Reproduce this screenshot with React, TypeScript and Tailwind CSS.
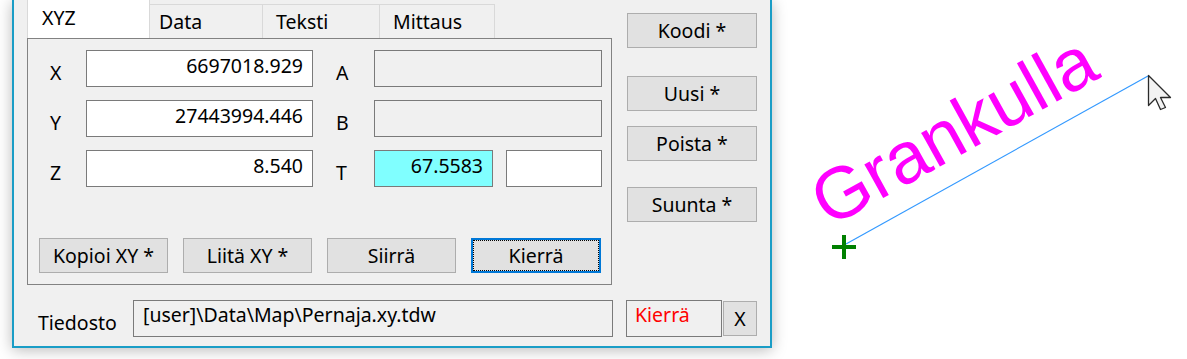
import React from 'react';

const Field: React.FC<{ value?: string; className?: string }> = ({ value = '', className = '' }) => (
  <div className={`h-[37px] border border-[#7a7a7a] pr-[9px] pt-[2px] text-right ${className}`}>{value}</div>
);

const Button: React.FC<{ label: string; className?: string }> = ({ label, className = '' }) => (
  <div className={`flex h-[35px] items-center justify-center border border-[#adadad] bg-[#e1e1e1] ${className}`}>
    {label}
  </div>
);

const Row: React.FC<{ left: string; value: string; right: string; children: React.ReactNode }> = ({
  left,
  value,
  right,
  children,
}) => (
  <div className="flex items-start">
    <div className="w-[58px] pl-[22px] pt-[10px]">{left}</div>
    <Field value={value} className="w-[227px] bg-white" />
    <div className="w-[61px] pl-[23px] pt-[10px]">{right}</div>
    {children}
  </div>
);

const Canvas: React.FC = () => (
  <svg width="415" height="359" viewBox="772 0 415 359" className="block shrink-0">
    <line x1="846" y1="244" x2="1148" y2="76" stroke="#3399ff" strokeWidth="1.2" />
    <text
      x="829"
      y="228"
      transform="rotate(-29 829 228)"
      fill="#ff00ff"
      fontFamily="'Liberation Sans', Arial, sans-serif"
      fontSize="73"
    >
      Grankulla
    </text>
    <g stroke="#008000" strokeWidth="4">
      <line x1="832" y1="247" x2="856" y2="247" />
      <line x1="844" y1="235" x2="844" y2="259" />
    </g>
    <path
      d="M0 0 V30 L7 23 L12 34 L17 32 L12 22 H22 Z"
      transform="translate(1148.5 75.5)"
      fill="#f2f2f2"
      stroke="#2b2b2b"
      strokeWidth="1.3"
      strokeLinejoin="round"
    />
  </svg>
);

export default function App() {
  return (
    <div className="flex h-[359px] w-[1187px] overflow-hidden bg-white font-['Noto_Sans','DejaVu_Sans',sans-serif] text-[19.5px] leading-[26px] text-black">
      <div className="relative z-10 ml-[12px] flex h-[348px] w-[760px] shrink-0 flex-col border-x-2 border-b-2 border-[#1a9dc6] bg-[#f0f0f0] shadow-[0_2px_14px_rgba(0,0,0,0.28)]">
        <div className="flex pl-[13px]">
          <div className="flex w-[585px] flex-col">
            <div className="flex h-[38px] items-end">
              <div className="h-[38px] w-[123px] border-x border-[#d9d9d9] bg-white pl-[14px] pt-[5px]">XYZ</div>
              <div className="h-[34px] w-[113px] border-r border-t border-[#d9d9d9] pl-[9px] pt-[4px]">Data</div>
              <div className="h-[34px] w-[117px] border-r border-t border-[#d9d9d9] pl-[13px] pt-[4px]">Teksti</div>
              <div className="h-[34px] w-[115px] border-r border-t border-[#d9d9d9] pl-[13px] pt-[4px]">Mittaus</div>
            </div>
            <div className="flex h-[247px] flex-col border border-[#828282] pb-[11px] pt-[11px]">
              <div className="flex flex-col gap-[13px]">
                <Row left="X" value="6697018.929" right="A">
                  <Field className="w-[228px] bg-[#f0f0f0]" />
                </Row>
                <Row left="Y" value="27443994.446" right="B">
                  <Field className="w-[228px] bg-[#f0f0f0]" />
                </Row>
                <Row left="Z" value="8.540" right="T">
                  <Field value="67.5583" className="w-[119px] bg-[#80ffff]" />
                  <Field className="ml-[13px] w-[96px] bg-white" />
                </Row>
              </div>
              <div className="mt-auto flex gap-[15px] pl-[11px]">
                <Button label="Kopioi XY *" className="w-[129px]" />
                <Button label="Liitä XY *" className="w-[129px]" />
                <Button label="Siirrä" className="w-[129px]" />
                <div className="h-[35px] w-[130px] border-2 border-[#0078d7] bg-[#e1e1e1]">
                  <div className="flex h-full w-full items-center justify-center border border-dotted border-black">
                    Kierrä
                  </div>
                </div>
              </div>
            </div>
          </div>
          <div className="ml-[15px] flex w-[130px] flex-col">
            <Button label="Koodi *" className="mt-[13px]" />
            <Button label="Uusi *" className="mt-[28px]" />
            <Button label="Poista *" className="mt-[15px]" />
            <Button label="Suunta *" className="mt-[26px]" />
          </div>
        </div>
        <div className="mt-[15px] flex items-start pl-[24px]">
          <div className="w-[95px] pt-[10px]">Tiedosto</div>
          <div className="h-[37px] w-[480px] border border-[#7a7a7a] bg-[#f0f0f0] pl-[9px] pt-[1px]">
            [user]\Data\Map\Pernaja.xy.tdw
          </div>
          <div className="ml-[13px] h-[37px] w-[96px] border border-[#7a7a7a] bg-[#f0f0f0] pl-[8px] pt-[1px] text-[#ff0000]">
            Kierrä
          </div>
          <Button label="X" className="ml-[1px] mt-[1px] w-[34px]" />
        </div>
      </div>
      <Canvas />
    </div>
  );
}
